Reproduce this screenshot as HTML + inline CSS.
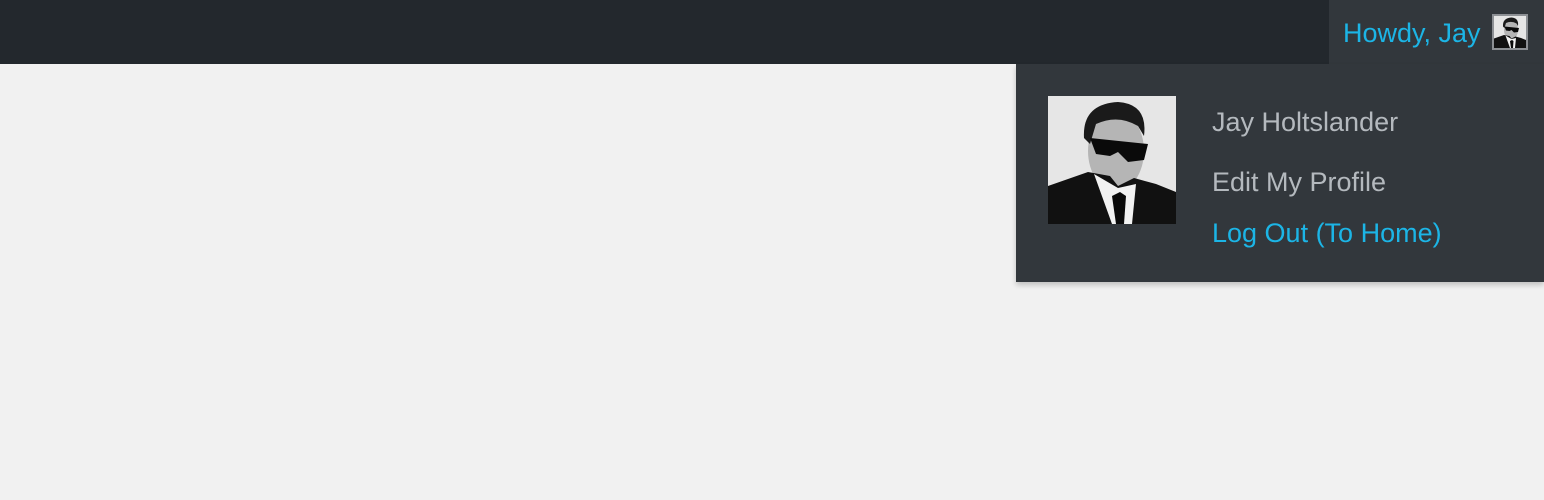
<!DOCTYPE html>
<html><head><meta charset="utf-8"><style>
html,body{margin:0;padding:0;width:1544px;height:500px;overflow:hidden;background:#f1f1f1;font-family:"Liberation Sans",sans-serif;}
.bar{position:absolute;left:0;top:0;width:1544px;height:64px;background:#23282d;}
.hov{position:absolute;left:1329px;top:0;width:215px;height:64px;background:#32373c;}
.t{position:absolute;font-size:27px;line-height:27px;white-space:nowrap;}
.drop{position:absolute;left:1016px;top:64px;width:528px;height:218px;background:#32373c;box-shadow:0 3px 5px rgba(0,0,0,.2);}
</style></head><body>
<div class="bar"></div>
<div class="hov"></div>
<div class="t" style="left:1343px;top:20px;color:#1cb5e6;">Howdy, Jay</div>
<svg style="position:absolute;left:1492px;top:14px" width="36" height="36" viewBox="0 0 128 128">
<rect width="128" height="128" fill="#8c8f94"/>
<g transform="translate(7,7) scale(0.89)">
<rect width="128" height="128" fill="#e6e6e6"/>
<ellipse cx="68" cy="55" rx="28" ry="40" fill="#b5b5b5"/>
<path d="M36 42 Q34 8 70 6 Q100 8 96 40 L90 30 Q70 18 48 28 L42 48 Z" fill="#1a1a1a"/>
<path d="M42 42 L100 48 L96 64 L80 66 L70 56 L62 60 L48 58 Z" fill="#0a0a0a"/>
<path d="M0 90 L40 76 L62 80 L70 90 L86 82 L108 88 L128 96 L128 128 L0 128 Z" fill="#111"/>
<path d="M46 78 L64 128 L84 128 L88 88 L70 92 Z" fill="#f2f2f2"/>
<path d="M64 100 L72 96 L78 100 L76 128 L68 128 Z" fill="#0a0a0a"/>
</g></svg>
<div class="drop"></div>
<svg style="position:absolute;left:1048px;top:96px" width="128" height="128" viewBox="0 0 128 128">
<rect width="128" height="128" fill="#e6e6e6"/>
<ellipse cx="68" cy="55" rx="28" ry="40" fill="#b5b5b5"/>
<path d="M36 42 Q34 8 70 6 Q100 8 96 40 L90 30 Q70 18 48 28 L42 48 Z" fill="#1a1a1a"/>
<path d="M42 42 L100 48 L96 64 L80 66 L70 56 L62 60 L48 58 Z" fill="#0a0a0a"/>
<path d="M0 90 L40 76 L62 80 L70 90 L86 82 L108 88 L128 96 L128 128 L0 128 Z" fill="#111"/>
<path d="M46 78 L64 128 L84 128 L88 88 L70 92 Z" fill="#f2f2f2"/>
<path d="M64 100 L72 96 L78 100 L76 128 L68 128 Z" fill="#0a0a0a"/>
</svg>
<div class="t" style="left:1212px;top:109px;color:#b4b9be;">Jay Holtslander</div>
<div class="t" style="left:1212px;top:169px;color:#b4b9be;">Edit My Profile</div>
<div class="t" style="left:1212px;top:220px;color:#1cb5e6;">Log Out (To Home)</div>
</body></html>
